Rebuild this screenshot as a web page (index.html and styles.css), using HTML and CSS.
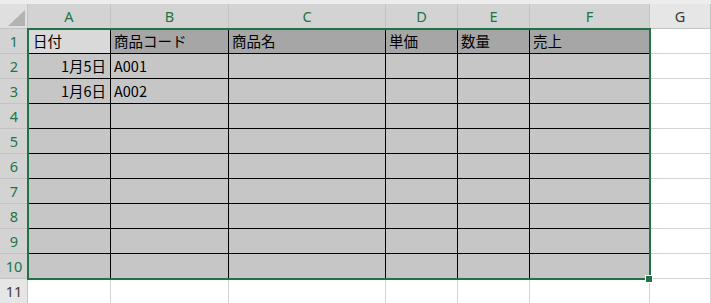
FILE: index.html
```html
<!DOCTYPE html>
<html lang="ja">
<head>
<meta charset="utf-8">
<title>Sheet</title>
<link rel="stylesheet" href="styles.css">
</head>
<body>
<div class="strip"></div>
<div class="sheet">
  <div class="grid">
    <div class="hdr corner"><div class="tri"></div></div>
    <div class="hdr col sel">A</div>
    <div class="hdr col sel">B</div>
    <div class="hdr col sel">C</div>
    <div class="hdr col sel">D</div>
    <div class="hdr col sel">E</div>
    <div class="hdr col sel">F</div>
    <div class="hdr col unsel">G</div>

    <div class="hdr row sel">1</div>
    <div class="c active">日付</div>
    <div class="c h">商品コード</div>
    <div class="c h">商品名</div>
    <div class="c h">単価</div>
    <div class="c h">数量</div>
    <div class="c h last">売上</div>
    <div class="w"></div>

    <div class="hdr row sel">2</div>
    <div class="c num">1月5日</div>
    <div class="c">A001</div>
    <div class="c"></div>
    <div class="c"></div>
    <div class="c"></div>
    <div class="c last"></div>
    <div class="w"></div>

    <div class="hdr row sel">3</div>
    <div class="c num">1月6日</div>
    <div class="c">A002</div>
    <div class="c"></div>
    <div class="c"></div>
    <div class="c"></div>
    <div class="c last"></div>
    <div class="w"></div>

    <div class="hdr row sel">4</div>
    <div class="c"></div><div class="c"></div><div class="c"></div><div class="c"></div><div class="c"></div><div class="c last"></div>
    <div class="w"></div>

    <div class="hdr row sel">5</div>
    <div class="c"></div><div class="c"></div><div class="c"></div><div class="c"></div><div class="c"></div><div class="c last"></div>
    <div class="w"></div>

    <div class="hdr row sel">6</div>
    <div class="c"></div><div class="c"></div><div class="c"></div><div class="c"></div><div class="c"></div><div class="c last"></div>
    <div class="w"></div>

    <div class="hdr row sel">7</div>
    <div class="c"></div><div class="c"></div><div class="c"></div><div class="c"></div><div class="c"></div><div class="c last"></div>
    <div class="w"></div>

    <div class="hdr row sel">8</div>
    <div class="c"></div><div class="c"></div><div class="c"></div><div class="c"></div><div class="c"></div><div class="c last"></div>
    <div class="w"></div>

    <div class="hdr row sel">9</div>
    <div class="c"></div><div class="c"></div><div class="c"></div><div class="c"></div><div class="c"></div><div class="c last"></div>
    <div class="w"></div>

    <div class="hdr row sel">10</div>
    <div class="c"></div><div class="c"></div><div class="c"></div><div class="c"></div><div class="c"></div><div class="c last"></div>
    <div class="w"></div>

    <div class="hdr row unsel">11</div>
    <div class="w"></div><div class="w"></div><div class="w"></div><div class="w"></div><div class="w"></div><div class="w"></div>
    <div class="w"></div>
  </div>
  <div class="selection"></div>
  <div class="handle"></div>
</div>
</body>
</html>
```

FILE: styles.css
```css
* { box-sizing: border-box; }

html, body {
  margin: 0;
  padding: 0;
  background: #ffffff;
  overflow: hidden;
}

body {
  font-family: "Noto Sans CJK JP", "Noto Sans", sans-serif;
  font-size: 14.5px;
  color: #000;
  width: 711px;
  height: 303px;
}

.strip {
  height: 4px;
  background: #ececec;
}

.sheet {
  position: relative;
}

.grid {
  display: grid;
  grid-template-columns: 28px 83px 118px 157px 72px 72px 120px 61px;
  grid-template-rows: repeat(12, 25px);
}

.hdr {
  display: flex;
  align-items: center;
  justify-content: center;
  border-right: 1px solid #c4c4c4;
  border-bottom: 1px solid #c4c4c4;
  font-family: "Noto Sans", "Noto Sans CJK JP", sans-serif;
  font-size: 14.5px;
  line-height: 1;
}

.hdr.sel {
  background: #d3d3d3;
  color: #217346;
}

.hdr.unsel {
  background: #e6e6e6;
  color: #3a3a3a;
}

.hdr.row {
  padding-left: 1px;
}

.corner {
  background: #dfdfdf;
  align-items: flex-end;
  justify-content: flex-end;
  padding: 0 2px 2px 0;
}

.tri {
  width: 17px;
  height: 16px;
  background: #b3b3b3;
  clip-path: polygon(100% 0, 100% 100%, 0 100%);
}

.c {
  display: flex;
  align-items: center;
  padding-left: 3px;
  background: #c6c6c6;
  border-right: 1px solid #000;
  border-bottom: 1px solid #000;
  white-space: nowrap;
  line-height: 1;
}

.c.h {
  background: #a6a6a6;
}

.c.active {
  background: #d9d9d9;
  padding-left: 5px;
}

.c.num {
  justify-content: flex-end;
  padding-right: 4px;
}

.c.last {
  border-right-color: #ffffff;
}

.w {
  background: #ffffff;
  border-right: 1px solid #d4d4d4;
  border-bottom: 1px solid #d4d4d4;
}

.selection {
  position: absolute;
  left: 27px;
  top: 24px;
  width: 624px;
  height: 252px;
  border: 2px solid #217346;
  pointer-events: none;
}

.handle {
  position: absolute;
  left: 645px;
  top: 271px;
  width: 8px;
  height: 8px;
  background: #217346;
  border: 1px solid #ffffff;
}
```
